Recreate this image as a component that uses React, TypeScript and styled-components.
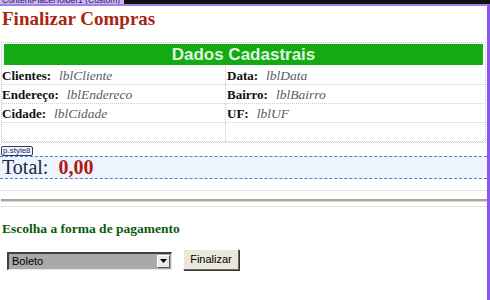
import React from "react";
import styled, { createGlobalStyle } from "styled-components";

const Global = createGlobalStyle`
  html, body { margin: 0; padding: 0; background: #ffffff; overflow: hidden; }
  #root { width: 490px; height: 300px; }
`;

const Frame = styled.div`
  width: 490px;
  height: 300px;
  display: flex;
  flex-direction: column;
  overflow: hidden;
`;

const TopStrip = styled.div`
  height: 4px;
  display: flex;
  overflow: hidden;
  background: #111111;
`;

const TabLabel = styled.div`
  height: 4px;
  width: 122px;
  background: #c9b8f0;
  color: #2a1a5a;
  font: 8.5px/9px "Liberation Sans", Arial, sans-serif;
  display: flex;
  align-items: flex-end;
  padding-left: 2px;
  overflow: hidden;
  span { margin-bottom: -1px; white-space: nowrap; }
`;

const Design = styled.div`
  flex: 1;
  border-top: 2px solid #a37ef0;
  border-right: 3px solid #8c52f2;
  display: flex;
  flex-direction: column;
  padding: 0 0 0 1px;
`;

const Title = styled.h1`
  margin: 3px 0 0 1px;
  font: bold 19px/20px "Liberation Serif", "Times New Roman", serif;
  color: #a8260f;
`;

const DataTable = styled.div`
  margin: 13px 1px 0 0;
  border: 1px dotted #c4c4c4;
  display: flex;
  flex-direction: column;
`;

const Header = styled.div`
  height: 21px;
  margin: 1px 2px 1px 2px;
  background: #14aa14;
  color: #dff7df;
  font: bold 17px/21px "Liberation Sans", Arial, sans-serif;
  text-align: center;
`;

const Row = styled.div<{ $h?: number }>`
  display: grid;
  grid-template-columns: 223px 1fr;
  height: ${(p) => p.$h ?? 18}px;
  border-bottom: 1px dotted #cfcfcf;
`;

const Cell = styled.div`
  display: flex;
  align-items: baseline;
  white-space: nowrap;
  padding-top: 2px;
  & + & { border-left: 1px dotted #cfcfcf; padding-left: 1px; }
`;

const Label = styled.span`
  font: bold 13px/16px "Liberation Serif", "Times New Roman", serif;
  color: #111111;
  margin-right: 8px;
`;

const Value = styled.span`
  font: italic 13.5px/16px "Liberation Serif", "Times New Roman", serif;
  color: #5a5a68;
`;

const TagRow = styled.div`
  margin-top: 3px;
  display: flex;
`;

const Tag = styled.span`
  font: 8px/8px "Liberation Sans", Arial, sans-serif;
  color: #1a2a5a;
  border: 1px solid #2a3a6a;
  border-radius: 2px;
  padding: 0 1px;
  background: #f3f6ff;
`;

const TotalBox = styled.div`
  margin-left: -1px;
  height: 21px;
  border-top: 1px dashed #5a78c8;
  border-bottom: 1px dashed #5a78c8;
  background: #edf4fc;
  display: flex;
  align-items: center;
  padding-left: 2px;
  gap: 10px;
`;

const TotalLabel = styled.span`
  font: 20px/21px "Liberation Serif", "Times New Roman", serif;
  color: #1c2848;
`;

const TotalValue = styled.span`
  font: bold 20px/21px "Liberation Serif", "Times New Roman", serif;
  color: #ad1c14;
`;

const Dotted = styled.div<{ $mt: number }>`
  margin-top: ${(p) => p.$mt}px;
  border-top: 1px dotted #d0d0d0;
`;

const Rule = styled.div`
  margin-top: 8px;
  border-top: 2px solid #a8a496;
  border-bottom: 1px solid #dedad0;
`;

const Subtitle = styled.h2`
  margin: 14px 0 0 1px;
  font: bold 13.5px/16px "Liberation Serif", "Times New Roman", serif;
  color: #0b5a0b;
`;

const Controls = styled.div`
  margin-top: 14px;
  display: flex;
  align-items: center;
  gap: 11px;
  padding-left: 6px;
`;

const SelectBox = styled.div`
  width: 159px;
  height: 15px;
  border-top: 2px solid #404040;
  border-left: 2px solid #404040;
  border-bottom: 1px solid #e6e6e6;
  border-right: 1px solid #e6e6e6;
  background: #a9a9a9;
  display: flex;
  align-items: center;
  justify-content: space-between;
  font: 11px/15px "Liberation Sans", Arial, sans-serif;
  color: #000;
  padding-left: 3px;
`;

const Arrow = styled.div`
  width: 13px;
  height: 13px;
  margin-right: 1px;
  background: #ece9e4;
  border: 1px solid #fff;
  border-right-color: #555;
  border-bottom-color: #555;
  box-sizing: border-box;
  display: flex;
  align-items: center;
  justify-content: center;
`;

const Button = styled.button`
  width: 56px;
  height: 21px;
  background: #ebe7d9;
  border: 1px solid;
  border-color: #ffffff #6b6b6b #6b6b6b #ffffff;
  box-shadow: 1px 1px 0 #333;
  font: 11px/15px "Liberation Sans", Arial, sans-serif;
  color: #000;
  padding: 0;
  margin-top: -2px;
`;

const rows = [
  ["Clientes:", "lblCliente", "Data:", "lblData"],
  ["Endereço:", "lblEndereco", "Bairro:", "lblBairro"],
  ["Cidade:", "lblCidade", "UF:", "lblUF"],
];

export default function App() {
  return (
    <>
      <Global />
      <Frame>
        <TopStrip>
          <TabLabel>
            <span>ContentPlaceHolder1 (Custom)</span>
          </TabLabel>
        </TopStrip>
        <Design>
          <Title>Finalizar Compras</Title>
          <DataTable>
            <Header>Dados Cadastrais</Header>
            {rows.map((r) => (
              <Row key={r[0]}>
                <Cell>
                  <Label>{r[0]}</Label>
                  <Value>{r[1]}</Value>
                </Cell>
                <Cell>
                  <Label>{r[2]}</Label>
                  <Value>{r[3]}</Value>
                </Cell>
              </Row>
            ))}
            <Row $h={18}>
              <Cell />
              <Cell />
            </Row>
          </DataTable>
          <TagRow>
            <Tag>p.style8</Tag>
          </TagRow>
          <TotalBox>
            <TotalLabel>Total:</TotalLabel>
            <TotalValue>0,00</TotalValue>
          </TotalBox>
          <Dotted $mt={11} />
          <Rule />
          <Dotted $mt={4} />
          <Subtitle>Escolha a forma de pagamento</Subtitle>
          <Controls>
            <SelectBox>
              <span>Boleto</span>
              <Arrow>
                <svg width="7" height="4" viewBox="0 0 7 4">
                  <path d="M0 0h7L3.5 4z" fill="#000" />
                </svg>
              </Arrow>
            </SelectBox>
            <Button>Finalizar</Button>
          </Controls>
        </Design>
      </Frame>
    </>
  );
}
